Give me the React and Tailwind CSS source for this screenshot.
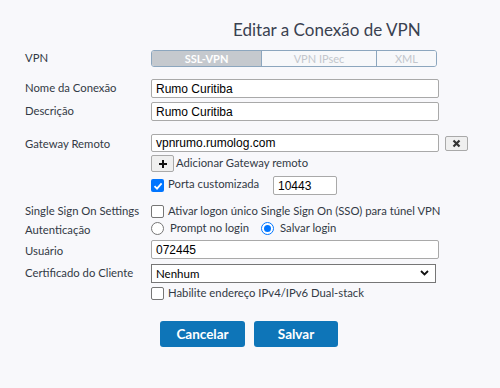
import React from "react";

const lato = { fontFamily: "Lato, 'Open Sans', sans-serif" };
const arial = { fontFamily: "'Liberation Sans', Arial, sans-serif" };

function Label({ children }) {
  return (
    <div className="w-[151px] shrink-0 pl-[25px] text-[11.3px] text-[#333a45]" style={lato}>
      {children}
    </div>
  );
}

function TextInput({ value, className = "" }) {
  return (
    <div
      className={
        "flex items-center border border-[#a9a9a9] bg-white pl-[4px] text-[12px] text-black rounded-[2px] " +
        className
      }
      style={arial}
    >
      {value}
    </div>
  );
}

function Box({ checked }) {
  return checked ? (
    <div className="w-[13px] h-[13px] rounded-[2px] bg-[#0075ff] flex items-center justify-center shrink-0">
      <svg width="10" height="10" viewBox="0 0 10 10">
        <path d="M1.5 5.2 L4 7.6 L8.6 2.3" stroke="white" strokeWidth="1.8" fill="none" />
      </svg>
    </div>
  ) : (
    <div className="w-[13px] h-[13px] rounded-[2px] border border-[#767676] bg-white shrink-0" />
  );
}

function Radio({ checked }) {
  return checked ? (
    <div className="w-[13px] h-[13px] rounded-full border border-[#0075ff] bg-white flex items-center justify-center shrink-0">
      <div className="w-[7px] h-[7px] rounded-full bg-[#0075ff]" />
    </div>
  ) : (
    <div className="w-[13px] h-[13px] rounded-full border border-[#767676] bg-white shrink-0" />
  );
}

export default function App() {
  return (
    <div className="w-[500px] h-[388px] bg-[#f8f8fb] text-[#333a45] relative overflow-hidden" style={lato}>
      <div className="pt-[19px] pl-[233px] text-[17px] text-[#3a4150] leading-[22px]" style={lato}>
        Editar a Conexão de VPN
      </div>

      {/* VPN */}
      <div className="flex items-center mt-[9px] h-[17px]">
        <Label>VPN</Label>
        <div className="flex w-[286px] h-[17px] border border-[#8ca6be] rounded-[3px] overflow-hidden text-[11px] leading-none">
          <div className="w-[109px] bg-[#c5c9ce] text-white font-bold flex items-center justify-center">SSL-VPN</div>
          <div className="w-[115px] bg-[#f7f8fa] text-[#c2c6cc] border-l border-[#8ca6be] flex items-center justify-center">
            VPN IPsec
          </div>
          <div className="flex-1 bg-[#f7f8fa] text-[#c2c6cc] border-l border-[#8ca6be] flex items-center justify-center">XML</div>
        </div>
      </div>

      {/* Nome */}
      <div className="flex items-center mt-[12px]">
        <Label>Nome da Conexão</Label>
        <TextInput value="Rumo Curitiba" className="w-[288px] h-[19px]" />
      </div>
      <div className="flex items-center mt-[4px]">
        <Label>Descrição</Label>
        <TextInput value="Rumo Curitiba" className="w-[288px] h-[19px]" />
      </div>

      {/* Gateway */}
      <div className="flex items-start mt-[13px]">
        <Label>
          <div className="pt-[2px]">Gateway Remoto</div>
        </Label>
        <div className="flex flex-col">
          <div className="flex items-center">
            <TextInput value="vpnrumo.rumolog.com" className="w-[288px] h-[18px]" />
            <div className="ml-[6px] w-[23px] h-[15px] border border-[#a9a9a9] rounded-[2px] bg-[#efefef] flex items-center justify-center">
              <svg width="9" height="9" viewBox="0 0 9 9">
                <path d="M1.5 1.5 L7.5 7.5 M7.5 1.5 L1.5 7.5" stroke="#333" strokeWidth="2.2" />
              </svg>
            </div>
          </div>
          <div className="flex items-center mt-[3px] h-[17px]">
            <div className="w-[23px] h-[17px] border border-[#a9a9a9] rounded-[2px] bg-[#efefef] flex items-center justify-center">
              <svg width="10" height="10" viewBox="0 0 10 10">
                <path d="M5 1 V9 M1 5 H9" stroke="#111" strokeWidth="2" />
              </svg>
            </div>
            <span className="ml-[2px] text-[11.3px]">Adicionar Gateway remoto</span>
          </div>
          <div className="flex items-center mt-[4px] h-[19px]">
            <Box checked />
            <span className="ml-[4px] text-[11.3px] w-[105px] -mt-[3px]">Porta customizada</span>
            <TextInput value="10443" className="w-[64px] h-[19px] ml-[0px]" />
          </div>
        </div>
      </div>

      {/* SSO */}
      <div className="flex items-center mt-[8px] h-[16px]">
        <Label>Single Sign On Settings</Label>
        <Box />
        <span className="ml-[4px] text-[11.3px]">Ativar logon único Single Sign On (SSO) para túnel VPN</span>
      </div>

      {/* Auth */}
      <div className="flex items-center mt-[1px] h-[16px]">
        <Label>
          <div className="pt-[5px]">Autenticação</div>
        </Label>
        <Radio />
        <span className="ml-[6px] text-[11.3px] w-[91px]">Prompt no login</span>
        <Radio checked />
        <span className="ml-[6px] text-[11.3px]">Salvar login</span>
      </div>

      {/* Usuário */}
      <div className="flex items-center mt-[4px]">
        <Label>
          <div className="pt-[3px]">Usuário</div>
        </Label>
        <TextInput value="072445" className="w-[288px] h-[19px]" />
      </div>

      {/* Certificado */}
      <div className="flex items-center mt-[4px]">
        <Label>Certificado do Cliente</Label>
        <div
          className="flex items-center justify-between w-[285px] h-[19px] border border-[#767676] bg-white pl-[4px] pr-[6px] text-[11.5px] text-black"
          style={lato}
        >
          <span>Nenhum</span>
          <svg width="9" height="6" viewBox="0 0 9 6">
            <path d="M1 1 L4.5 4.5 L8 1" stroke="#111" strokeWidth="1.8" fill="none" />
          </svg>
        </div>
      </div>

      {/* Dual-stack */}
      <div className="flex items-center mt-[4px] h-[13px]">
        <div className="w-[151px]" />
        <Box />
        <span className="ml-[4px] text-[11.3px]">Habilite endereço IPv4/IPv6 Dual-stack</span>
      </div>

      {/* Buttons */}
      <div className="flex mt-[21px] pl-[160px] gap-[9px]">
        <div className="w-[85px] h-[26px] rounded-[3px] bg-[#0e75b8] text-white font-bold text-[13.5px] flex items-center justify-center">
          Cancelar
        </div>
        <div className="w-[84px] h-[26px] rounded-[3px] bg-[#0e75b8] text-white font-bold text-[13.5px] flex items-center justify-center">
          Salvar
        </div>
      </div>
    </div>
  );
}
